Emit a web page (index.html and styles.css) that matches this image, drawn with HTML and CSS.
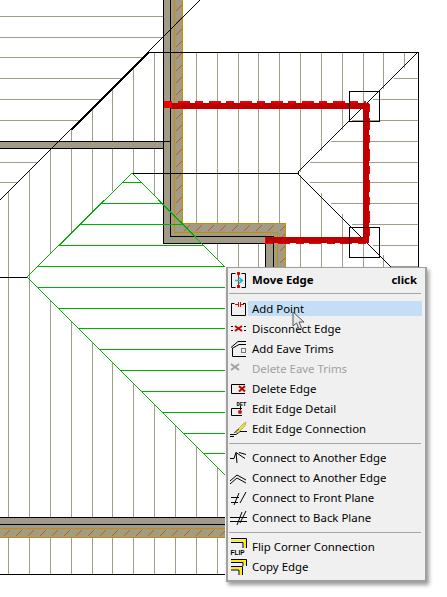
FILE: index.html
```html
<!DOCTYPE html>
<html lang="en">
<head>
  <meta charset="UTF-8" />
  <meta name="viewport" content="width=device-width, initial-scale=1.0" />
  <title>Roof Plan - Edge Menu</title>
  <link rel="stylesheet" href="styles.css">
</head>
<body>
  <div class="plan">
    <!-- Roof plan drawing -->
    <svg class="drawing" width="447" height="597" viewBox="0 0 447 597">
      <defs>
        <pattern id="hatchV" patternUnits="userSpaceOnUse" x="175" y="0" width="8" height="12">
          <path class="hatch" d="M1 11L7 5"/>
        </pattern>
        <pattern id="hatchH" patternUnits="userSpaceOnUse" x="2" y="224" width="12" height="8">
          <path class="hatch" d="M2 7L8 1"/>
        </pattern>
        <pattern id="hatchB" patternUnits="userSpaceOnUse" x="2" y="529" width="12" height="8">
          <path class="hatch" d="M2 7L8 1"/>
        </pattern>
      </defs>

      <!-- Rafters -->
      <path class="rafter" d="M0 16.5H163M0 37.5H163M0 57.5H143M0 78.5H122M0 99.5H101M0 120.5H80M0 162.5H38M0 182.5H18
        M71.5 130V141M92.5 108V141M112.5 88V141M133.5 67V141M154.5 52V141
        M8.5 192V517M29.5 171V517M50.5 150V254M71.5 148V233M92.5 148V212M112.5 148V191M133.5 148V173M154.5 148V195
        M50.5 300V517M71.5 321V517M92.5 342V517M112.5 362V517M133.5 383V517M154.5 404V517M175.5 425V517M196.5 446V517M217.5 467V517
        M8.5 537V574M29.5 537V574M50.5 537V574M71.5 537V574M92.5 537V574M112.5 537V574M133.5 537V574M154.5 537V574M175.5 537V574M196.5 537V574M217.5 537V574
        M196.5 52V223M217.5 52V223M238.5 52V223M258.5 52V223M279.5 52V223
        M217.5 243V259M238.5 243V267M258.5 243V267
        M300.5 52V172M321.5 52V151M342.5 52V130M363.5 52V109M383.5 52V89M404.5 52V68
        M300.5 175V267M321.5 193V267M342.5 214V267M363.5 235V267M383.5 255V267
        M394 78.5H418M373 99.5H418M352 120.5H418M331 141.5H418M310 162.5H418M310 182.5H418M331 203.5H418M352 224.5H418M373 245.5H418M391 266.5H418"/>

      <!-- Walls -->
      <path class="wall" d="M163 0H183V223H285V267H265V243H163Z"/>
      <rect class="wall" x="0" y="141" width="163" height="7"/>
      <rect class="wall" x="0" y="517" width="225" height="20"/>
      <path class="hatch-fill-v" d="M175 0H183V223H175Z"/>
      <path class="hatch-fill-h" d="M183 224H285V232H183Z"/>
      <path class="hatch-fill-v" d="M278 232H285V267H278Z"/>
      <rect class="hatch-fill-b" x="0" y="529" width="225" height="8"/>
      <path class="gold" d="M174.5 0V232.5H277.5V267M182.5 0V223.5H285.5V267M0 528.5H225M0 537.5H225"/>

      <!-- Outlines -->
      <path class="outline" d="M163.5 0V243.5H265.5V267M170.5 0V236.5H273.5V267M0 141.5H163M0 148.5H163M163 141.5H170
        M148 52.5H418.5V267M133 173.5H298M0 277.5H27M0 517.5H225M0 524.5H225M0 574.5H225"/>
      <path class="diagonal" d="M0 200L202 -2M418 52L298 172L298 174L391 267"/>
      <path class="diagonal-thick" d="M71 130L149 52"/>

      <!-- Selected faces in green -->
      <path class="green" d="M122 182.5H141M101 203.5H162M80 224.5H183M59 245.5H203M38 266.5H225M37 287.5H225M58 308.5H225M78 328.5H225M99 349.5H225M120 370.5H225M141 391.5H225M162 412.5H225M183 433.5H225M203 453.5H225"/>
      <path class="green" d="M225 267L132 173L27 277L225 475"/>

      <!-- Selected edge in red -->
      <path class="edge-bright" d="M164 104.5H366M366 104V240M366 240.5H265"/>
      <path class="edge-dark" d="M171 105.5H365.5V240H266"/>

      <!-- Corner handles -->
      <rect class="handle" x="349.5" y="91.5" width="30" height="30"/>
      <rect class="handle" x="349.5" y="227.5" width="30" height="30"/>
    </svg>

    <!-- Context menu -->
    <div class="menu">
      <div class="row header">
        <svg class="icon" viewBox="0 0 18 18">
          <path class="ink" d="M5.5 1.5H1.5V15.5H5.5M11.5 1.5H15.5V15.5H11.5"/>
          <path class="red" d="M8.5 1V15"/>
          <rect class="red-fill" x="7" y="0" width="3" height="3"/>
          <rect class="red-fill" x="7" y="13" width="3" height="3"/>
          <path class="cyan" d="M5 8.5H12M9 5.5L12.5 8.5L9 11.5"/>
        </svg>
        <span class="label">Move Edge</span>
        <span class="hint">click</span>
      </div>
      <div class="divider first"></div>

      <div class="row active">
        <svg class="icon" viewBox="0 0 18 18">
          <path class="ink" d="M4.5 3.5H1.5V15.5H15.5V3.5H13"/>
          <path class="red" d="M8.5 2V7M10.5 2V7M5 4.5H8M11 4.5H14"/>
        </svg>
        <span class="label">Add Point</span>
      </div>
      <div class="row">
        <svg class="icon" viewBox="0 0 18 18">
          <path class="ink" d="M1 6.5H3M1 10.5H3M14 6.5H16M14 10.5H16"/>
          <path class="red-thick" d="M5 6L12 11M12 6L5 11"/>
        </svg>
        <span class="label">Disconnect Edge</span>
      </div>
      <div class="row">
        <svg class="icon" viewBox="0 0 18 18">
          <path class="ink" d="M1 7.5L8 1.5H16M2 8.5L9 4.5H16M2.5 8V16.5H16"/>
          <rect class="grey-line" x="11.5" y="8.5" width="4" height="4"/>
        </svg>
        <span class="label">Add Eave Trims</span>
      </div>
      <div class="row disabled">
        <svg class="icon" viewBox="0 0 18 18">
          <path class="grey-thick" d="M1 4L9 10M9 4L1 10"/>
        </svg>
        <span class="label">Delete Eave Trims</span>
      </div>
      <div class="row">
        <svg class="icon" viewBox="0 0 18 18">
          <path class="ink" d="M15 4.5H1.5V13.5H15"/>
          <path class="red-thick" d="M9 6L15 11.5M15 6L9 11.5"/>
        </svg>
        <span class="label">Delete Edge</span>
      </div>
      <div class="row">
        <svg class="icon" viewBox="0 0 18 18">
          <text class="tiny" x="6.5" y="5.5">DET</text>
          <path class="ink" d="M12 8.5H1.5V15.5H12"/>
          <path class="ink" d="M10.5 6V10"/>
          <circle class="red-fill" cx="10" cy="12" r="2"/>
        </svg>
        <span class="label">Edit Edge Detail</span>
      </div>
      <div class="row">
        <svg class="icon" viewBox="0 0 18 18">
          <path class="ink" d="M0 14.5H6L10 11.5H17M0 16.5H4"/>
          <path class="pencil" d="M5 12L13 4L16 2L15 6L8 13Z"/>
          <path class="ink-thin" d="M4 13L9 9"/>
        </svg>
        <span class="label">Edit Edge Connection</span>
      </div>
      <div class="divider"></div>

      <div class="row">
        <svg class="icon" viewBox="0 0 18 18">
          <path class="ink" d="M0 9.5H4L6 3.5L15 9.5M6 3.5L7 14M9 3.5L16 5.5"/>
        </svg>
        <span class="label">Connect to Another Edge</span>
      </div>
      <div class="row">
        <svg class="icon" viewBox="0 0 18 18">
          <path class="ink" d="M0 12L7 6L16 11M0 15L7 9L16 14"/>
        </svg>
        <span class="label">Connect to Another Edge</span>
      </div>
      <div class="row">
        <svg class="icon" viewBox="0 0 18 18">
          <path class="ink" d="M1 8.5H9M1 13.5H8M4 16L9 4M10 14L16 3"/>
        </svg>
        <span class="label">Connect to Front Plane</span>
      </div>
      <div class="row">
        <svg class="icon" viewBox="0 0 18 18">
          <path class="ink" d="M0 8.5H17M0 12.5H17M7 16L12 3M10 14L16 2"/>
        </svg>
        <span class="label">Connect to Back Plane</span>
      </div>
      <div class="divider"></div>

      <div class="row">
        <svg class="icon" viewBox="0 0 18 18">
          <path class="yellow" d="M1 2.5H15V10"/>
          <path class="ink" d="M1 0.5H16.5V10M1 4.5H13V10"/>
          <text class="flip" x="0.5" y="16.5">FLIP</text>
        </svg>
        <span class="label">Flip Corner Connection</span>
      </div>
      <div class="row">
        <svg class="icon" viewBox="0 0 18 18">
          <path class="yellow" d="M1 3H15V7M1 10H11V17"/>
          <path class="ink" d="M1 1.5H16.5V8M1 4.5H13V8M1 8.5H12.5V17M1 12H9V17"/>
        </svg>
        <span class="label">Copy Edge</span>
      </div>
    </div>

    <!-- Mouse pointer over the menu -->
    <svg class="pointer" width="14" height="20" viewBox="0 0 14 20">
      <path d="M1 1V15L4.5 12L7 18L9.5 17L7 11H12Z"/>
    </svg>
  </div>
</body>
</html>
```
FILE: styles.css
```css
/* General styles */
body {
  margin: 0;
  background-color: #fff;
  font-family: "Noto Sans", "Open Sans", Arial, sans-serif;
  overflow: hidden;
}
.plan {
  position: relative;
  width: 447px;
  height: 597px;
}
/* Drawing */
.drawing {
  display: block;
  shape-rendering: crispEdges;
  fill: none;
}
.rafter {
  stroke: #a19b88;
  stroke-width: 1;
}
.wall {
  fill: #a19b88;
}
.gold {
  stroke: #c09000;
  stroke-width: 1;
}
.hatch {
  stroke: #c85a10;
  stroke-width: 1;
  fill: none;
}
.hatch-fill-v {
  fill: url(#hatchV);
}
.hatch-fill-h {
  fill: url(#hatchH);
}
.hatch-fill-b {
  fill: url(#hatchB);
}
.outline {
  stroke: #000;
  stroke-width: 1;
}
.diagonal {
  stroke: #000;
  stroke-width: 1;
}
.diagonal-thick {
  stroke: #000;
  stroke-width: 2;
}
.green {
  stroke: #00b000;
  stroke-width: 1;
}
.edge-bright {
  stroke: #f00000;
  stroke-width: 7;
  stroke-dasharray: 8 6 12 5;
}
.edge-dark {
  stroke: #c00000;
  stroke-width: 6;
}
.handle {
  stroke: #000;
  stroke-width: 1;
}
/* Context menu */
.menu {
  position: absolute;
  top: 267px;
  left: 226px;
  width: 197px;
  height: 309px;
  padding-top: 3px;
  background-color: #f0f0f0;
  border: 2px solid #a0a0a0;
  border-top-width: 1px;
  box-shadow: 2px 3px 4px rgba(0, 0, 0, 0.4);
  font-size: 11.4px;
  color: #000;
}
.row {
  display: flex;
  height: 20px;
}
.icon {
  flex: none;
  width: 18px;
  height: 18px;
  margin: 1px 0 0 2px;
  fill: none;
  overflow: visible;
}
.label {
  flex: 1;
  height: 15px;
  margin: 2px 3px 0 0;
  padding-left: 4px;
  line-height: 16px;
  white-space: nowrap;
}
.row.active .label {
  background-color: #c4dff5;
}
.row.disabled .label {
  color: #a0a0a0;
}
.header .label,
.hint {
  font-weight: bold;
  line-height: 14px;
}
.hint {
  line-height: 18px;
  margin-right: 8px;
}
.divider {
  height: 1px;
  margin: 4px 4px 4px 1px;
  background-color: #a6a6a6;
}
.divider.first {
  margin-top: 2px;
  margin-bottom: 5px;
}
/* Icon strokes */
.ink {
  stroke: #000;
  stroke-width: 1;
}
.ink-thin {
  stroke: #222;
  stroke-width: 0.8;
}
.red {
  stroke: #d01010;
  stroke-width: 1;
}
.red-fill {
  fill: #d01010;
}
.red-thick {
  stroke: #c80000;
  stroke-width: 2;
}
.cyan {
  stroke: #00c8d8;
  stroke-width: 1.5;
}
.grey-line {
  stroke: #777;
  stroke-width: 1;
}
.grey-thick {
  stroke: #a0a0a0;
  stroke-width: 2;
}
.yellow {
  stroke: #ffee00;
  stroke-width: 2;
}
.pencil {
  fill: #e8e040;
  stroke: #808040;
  stroke-width: 0.5;
}
.tiny {
  font-family: "Liberation Mono", monospace;
  font-size: 5.5px;
  font-weight: bold;
  fill: #000;
}
.flip {
  font-family: "Liberation Sans", Arial, sans-serif;
  font-size: 6.5px;
  font-weight: bold;
  fill: #000;
}
/* Mouse pointer */
.pointer {
  position: absolute;
  top: 311px;
  left: 292px;
}
.pointer path {
  fill: #e8e8e8;
  stroke: #555;
  stroke-width: 1;
}
```
